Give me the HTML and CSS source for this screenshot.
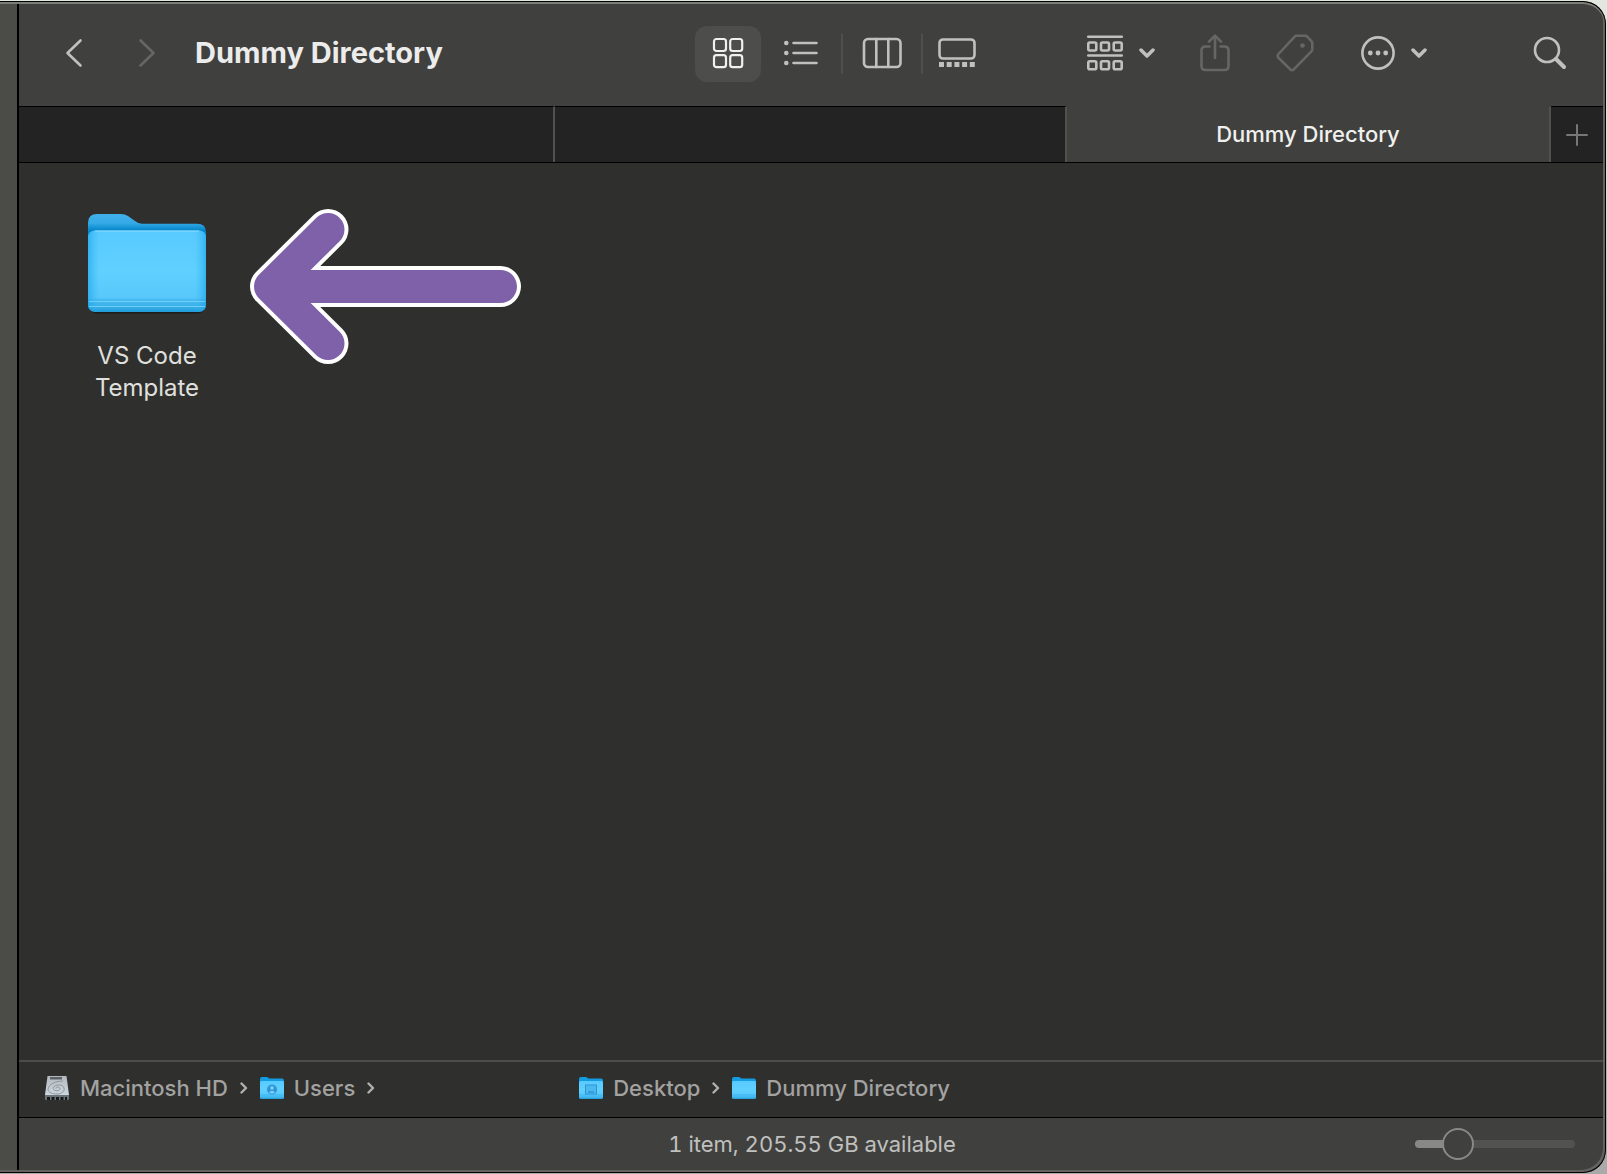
FILE: index.html
```html
<!DOCTYPE html>
<html lang="en">
<head>
<meta charset="utf-8">
<meta name="viewport" content="width=device-width, initial-scale=1">
<title>Dummy Directory</title>
<link rel="stylesheet" href="styles.css">
</head>
<body>
<svg class="defs" width="0" height="0" aria-hidden="true">
  <defs>
    <linearGradient id="back" x1="0" y1="0" x2="0" y2="1"><stop offset="0" stop-color="#41b0ea"/><stop offset=".15" stop-color="#35aae6"/><stop offset=".27" stop-color="#0687cb"/><stop offset="1" stop-color="#0687cb"/></linearGradient>
    <linearGradient id="front" x1="0" y1="0" x2="0" y2="1"><stop offset="0" stop-color="#59caff"/><stop offset=".5" stop-color="#60d0ff"/><stop offset=".83" stop-color="#58c8fb"/><stop offset=".84" stop-color="#49bdf3"/><stop offset=".93" stop-color="#3ab1ea"/><stop offset="1" stop-color="#1f9bd8"/></linearGradient>
    <linearGradient id="edge" x1="0" y1="0" x2="1" y2="0"><stop offset="0" stop-color="#16a0e6" stop-opacity=".6"/><stop offset=".1" stop-color="#3bb8f5" stop-opacity="0"/><stop offset=".9" stop-color="#3bb8f5" stop-opacity="0"/><stop offset="1" stop-color="#16a0e6" stop-opacity=".6"/></linearGradient>
    <linearGradient id="metal" x1="0" y1="0" x2="0" y2="1"><stop offset="0" stop-color="#b4b9be"/><stop offset="1" stop-color="#cfdde3"/></linearGradient>
    <symbol id="folder" viewBox="0 0 24 24">
      <path d="M0 3Q0 1 2 1H7L9.500 2.500H22Q24 2.500 24 4.500V12H0Z" fill="#149ce2"/>
      <rect y="5" width="24" height="18" rx="1.500" fill="url(#front)"/>
      <path d="M0 19H24" stroke="#2ca8e8" stroke-width=".7"/>
    </symbol>
  </defs>
</svg>
<div class="window">
  <aside class="sidebar" aria-label="Sidebar"></aside>
  <main class="main">
    <header class="toolbar">
      <nav class="history" aria-label="History">
        <button class="tool nav-button" aria-label="Back"><svg width="18" height="30" viewBox="0 0 18 30"><path d="M15.500 2.500 2.500 15l13 12.500"/></svg></button>
        <button class="tool nav-button dim" aria-label="Forward"><svg width="18" height="30" viewBox="0 0 18 30"><path d="M2.500 2.500 15.500 15l-13 12.500"/></svg></button>
      </nav>
      <h1 class="title">Dummy Directory</h1>
      <div class="views" role="group" aria-label="View">
        <button class="tool view selected" aria-label="Icons"><svg width="32" height="32" viewBox="0 0 32 32"><g stroke-width="2.200"><rect x="2" y="2" width="12" height="12" rx="2.500"/><rect x="18.200" y="2" width="12" height="12" rx="2.500"/><rect x="2" y="18.200" width="12" height="12" rx="2.500"/><rect x="18.200" y="18.200" width="12" height="12" rx="2.500"/></g></svg></button>
        <button class="tool view" aria-label="List"><svg width="34" height="26" viewBox="0 0 34 26"><path d="M9.500 3H32.500M9.500 13H32.500M9.500 23H32.500"/><g class="solid"><circle cx="2.300" cy="3" r="2.300"/><circle cx="2.300" cy="13" r="2.300"/><circle cx="2.300" cy="23" r="2.300"/></g></svg></button>
        <span class="separator"></span>
        <button class="tool view columns" aria-label="Columns"><svg width="40" height="32" viewBox="0 0 40 32"><rect x="2" y="2" width="36.500" height="28" rx="4"/><path d="M14.300 2V30M26.300 2V30"/></svg></button>
        <span class="separator"></span>
        <button class="tool view gallery" aria-label="Gallery"><svg width="38" height="30" viewBox="0 0 38 30"><rect x="1.500" y="1.500" width="35" height="19" rx="3.500"/><g class="solid"><rect x="1" y="24" width="5" height="5"/><rect x="8.700" y="24" width="5" height="5"/><rect x="16.400" y="24" width="5" height="5"/><rect x="24.100" y="24" width="5" height="5"/><rect x="31.800" y="24" width="5" height="5"/></g></svg></button>
      </div>
      <div class="actions">
        <button class="tool menu" aria-label="Group">
          <svg width="36" height="36" viewBox="0 0 36 36"><path d="M1.200 1.700H34.800M1.200 20.500H34.800"/><rect x="1.300" y="7.500" width="8" height="8" rx="1.500"/><rect x="14" y="7.500" width="8" height="8" rx="1.500"/><rect x="26.700" y="7.500" width="8" height="8" rx="1.500"/><rect x="1.300" y="26.300" width="8" height="8" rx="1.500"/><rect x="14" y="26.300" width="8" height="8" rx="1.500"/><rect x="26.700" y="26.300" width="8" height="8" rx="1.500"/></svg>
          <svg class="heavy" width="16" height="10" viewBox="0 0 16 10"><path d="M2 2 8 8 14 2"/></svg>
        </button>
        <button class="tool action dim" aria-label="Share"><svg width="30" height="38" viewBox="0 0 30 38"><path d="M9.500 12.500H5.500Q1.500 12.500 1.500 16.500V32Q1.500 36 5.500 36H24.500Q28.500 36 28.500 32V16.500Q28.500 12.500 24.500 12.500H20.500M15 24V2M9 7.700 15 1.700 21 7.700"/></svg></button>
        <button class="tool action dim" aria-label="Tags"><svg width="38" height="38" viewBox="0 0 38 38"><path d="M20.500 1.800H29Q30.500 1.800 31.500 2.800L35.300 7Q36.300 8 36.300 9.500V15Q36.300 16.500 35.200 17.600L18 35.200Q16 37 14 35.200L2.700 24Q.700 22 2.500 20L18.500 2.800Q19.300 1.800 20.500 1.800Z"/><circle class="solid" cx="26.500" cy="11.500" r="2.300"/></svg></button>
        <button class="tool menu more" aria-label="More">
          <svg width="34" height="34" viewBox="0 0 34 34"><circle cx="17" cy="17" r="15.600"/><g class="solid"><circle cx="9.300" cy="17" r="2.400"/><circle cx="17" cy="17" r="2.400"/><circle cx="24.700" cy="17" r="2.400"/></g></svg>
          <svg class="heavy" width="16" height="10" viewBox="0 0 16 10"><path d="M2 2 8 8 14 2"/></svg>
        </button>
        <button class="tool action search" aria-label="Search"><svg width="34" height="34" viewBox="0 0 34 34"><circle cx="14" cy="14" r="12"/><path d="M23 23 31 31" stroke-width="4"/></svg></button>
      </div>
    </header>
    <div class="tabs">
      <button class="tab first" aria-label="Tab 1"></button>
      <button class="tab second" aria-label="Tab 2"></button>
      <button class="tab active">Dummy Directory</button>
      <button class="new-tab" aria-label="New tab"><svg width="22" height="22" viewBox="0 0 22 22"><path d="M11 1V21M1 11H21"/></svg></button>
    </div>
    <section class="files">
      <a class="file" href="#">
        <svg width="118" height="100" viewBox="0 0 118 100">
          <path d="M1 90Q1 99.500 9 99.500H109Q117 99.500 117 90Z" fill="#1d1d1c"/>
          <path d="M0 9Q0 0 9 0H33Q37 0 40 2L47 7Q50 9.700 54 9.700H109Q118 9.700 118 18V60H0Z" fill="url(#back)"/>
          <rect y="16.500" width="118" height="81.500" rx="7" fill="url(#front)"/>
          <rect y="16.500" width="118" height="81.500" rx="7" fill="url(#edge)"/>
          <path d="M7 17H111" stroke="#8bdcff" stroke-width="1"/>
          <path d="M1 87.500H117M1 92.500H117" stroke="#70cdf8" stroke-width="1"/>
        </svg>
        <span class="file-name">VS Code Template</span>
      </a>
      <svg class="arrow" width="272" height="156" viewBox="250 209 272 156" aria-hidden="true"><path class="arrow-rim" d="M500.500 286.500H270.500M328 229.500 270.500 286.500 328 343.500"/><path class="arrow-body" d="M500.500 286.500H270.500M328 229.500 270.500 286.500 328 343.500"/></svg>
    </section>
    <nav class="path" aria-label="Path">
      <a class="crumb" href="#"><svg width="26" height="26" viewBox="0 0 26 26"><path d="M3.500 1H22.500L25 20V23H1V20Z" fill="url(#metal)"/><path d="M1 20H25V24Q25 25 24 25H2Q1 25 1 24Z" fill="#6b7377"/><path d="M3 23.500H23" stroke="#17191a" stroke-width="3" stroke-dasharray="3 1.500"/><rect x="6" y="2" width="12" height="2.500" fill="#5c6165"/><path d="M19 6C12 6 5 9 4 14C4 18 9 19 13 19C18 19 21 16 20 13C19 9 11 9 9 13C9 16 16 17 16 13.500C15 11.500 12 12 12 13.500" fill="none" stroke="#8d979b" stroke-width="1"/></svg>Macintosh HD</a>
      <svg class="chevron" width="8" height="14" viewBox="0 0 8 14"><path d="M1.500 2.500 6 7 1.500 11.500"/></svg>
      <a class="crumb" href="#"><svg width="24" height="24"><use href="#folder"/><circle cx="12" cy="13.500" r="5" fill="#2f95d6"/><circle cx="12" cy="12" r="1.800" fill="#7cd2fa"/><path d="M9 16.500Q12 13 15 16.500Q12 18.500 9 16.500" fill="#7cd2fa"/></svg>Users</a>
      <svg class="chevron" width="8" height="14" viewBox="0 0 8 14"><path d="M1.500 2.500 6 7 1.500 11.500"/></svg>
      <span class="hidden-crumb"></span>
      <a class="crumb" href="#"><svg width="24" height="24"><use href="#folder"/><rect x="6.500" y="9" width="11" height="9" fill="#4ab9ee" stroke="#2f95d6"/><path d="M9 16H15" stroke="#2f95d6" stroke-width="1.500"/></svg>Desktop</a>
      <svg class="chevron" width="8" height="14" viewBox="0 0 8 14"><path d="M1.500 2.500 6 7 1.500 11.500"/></svg>
      <a class="crumb" href="#"><svg width="24" height="24"><use href="#folder"/></svg>Dummy Directory</a>
    </nav>
    <footer class="status">
      <span class="summary">1 item, 205.55 GB available</span>
      <input class="zoom" type="range" min="0" max="100" value="21" aria-label="Icon size">
    </footer>
  </main>
</div>
</body>
</html>
```
FILE: styles.css
```css
* {
  box-sizing: border-box;
}

body {
  margin: 0;
  background: linear-gradient(#e2e8e0, #a9a9a9);
  color: #e0e0df;
  font-family: Inter, "Liberation Sans", sans-serif;
  font-size: 22px;
}

button {
  margin: 0;
  padding: 0;
  border: 0;
  background: none;
  color: inherit;
  font: inherit;
}

a {
  color: inherit;
  text-decoration: none;
}

svg {
  display: block;
  flex: none;
}

.defs {
  position: absolute;
}

.window {
  position: relative;
  display: flex;
  min-height: 100vh;
  border: 1px solid transparent;
  border-left: 0;
  border-radius: 0 24px 24px 0;
  background: #2f2f2d padding-box;
  overflow: hidden;
}

/* dark outline with the light inner rim that runs over the whole window */
.window::after {
  content: "";
  position: absolute;
  inset: 0;
  border: 1px solid #000;
  border-left: 0;
  border-radius: 0 23px 23px 0;
  box-shadow: inset 0 2px #7b7f78, inset -2px -2px #62625f;
  pointer-events: none;
}

.sidebar {
  width: 19px;
  flex: none;
  border-right: 2px solid #000;
  background: #4b4b48;
}

.main {
  flex: 1;
  min-width: 0;
  display: flex;
  flex-direction: column;
  padding: 1px 1px 1px 0;
}

.toolbar {
  display: flex;
  align-items: center;
  height: 104px;
  padding: 0 25px 0 31px;
  background: #40403e;
}

.history {
  display: flex;
  gap: 25px;
}

.tool {
  display: flex;
  align-items: center;
  justify-content: center;
  height: 56px;
  padding-bottom: 2px;
  border-radius: 12px;
  color: #c0c0bf;
}

.tool svg {
  fill: none;
  stroke: currentColor;
  stroke-width: 2.6;
  stroke-linecap: round;
  stroke-linejoin: round;
}

.tool .heavy {
  stroke-width: 3.5;
}

.tool .solid {
  fill: currentColor;
  stroke: none;
}

.tool.dim {
  color: #666664;
}

.nav-button {
  width: 48px;
}

.title {
  flex: 1;
  margin: 0 0 0 24px;
  padding-bottom: 2px;
  color: #ececec;
  font-size: 29px;
  font-weight: 700;
  line-height: 36px;
  white-space: nowrap;
}

.views {
  display: flex;
  align-items: center;
  gap: 7px;
}

.view {
  width: 66px;
}

.view.selected {
  background: #4d4d4b;
  color: #f0f0ef;
}

.view.columns {
  width: 64px;
}

.view.gallery {
  width: 54px;
}

.separator {
  width: 2px;
  height: 40px;
  background: #4f4f4d;
}

.actions {
  display: flex;
  gap: 20px;
  margin-left: 93px;
}

.menu {
  gap: 16px;
  padding: 0 10px 2px;
}

.action {
  width: 60px;
}

.more {
  padding-left: 16px;
}

.search {
  margin-left: 63px;
}

.tabs {
  display: flex;
  height: 57px;
  border-bottom: 1px solid #000;
  background: #40403e;
}

.tab {
  min-width: 0;
  border-top: 1px solid #000;
  border-right: 2px solid #515150;
  background: #232323;
  text-align: center;
}

.first {
  flex: 536 1 0;
}

.second {
  flex: 512 1 0;
}

.active {
  flex: 484 1 0;
  padding-bottom: 2px;
  border-top-color: transparent;
  background: #40403e;
  color: #f0f0ef;
  font-weight: 500;
}

.new-tab {
  display: flex;
  align-items: center;
  justify-content: center;
  width: 54px;
  padding-right: 2px;
  border-top: 1px solid #000;
  background: #232323;
}

.new-tab svg {
  stroke: #777775;
  stroke-width: 2;
  stroke-linecap: round;
}

.files {
  position: relative;
  flex: 1;
  padding: 51px 64px;
}

.file {
  display: flex;
  flex-direction: column;
  align-items: center;
  gap: 26px;
  width: 128px;
}

.file-name {
  width: 112px;
  font-size: 24px;
  line-height: 32px;
  text-align: center;
}

.arrow {
  position: absolute;
  left: 231px;
  top: 46px;
  fill: none;
  stroke-linecap: round;
  stroke-linejoin: round;
}

.arrow-rim {
  stroke: #fff;
  stroke-width: 41;
}

.arrow-body {
  stroke: #7e61a9;
  stroke-width: 33;
}

.path {
  display: flex;
  align-items: center;
  gap: 12px;
  height: 57px;
  padding: 0 0 4px 25px;
  border-top: 2px solid #4c4c4a;
  color: #a2a2a1;
  font-weight: 500;
}

.crumb {
  display: flex;
  align-items: center;
  gap: 10px;
  white-space: nowrap;
}

.chevron {
  fill: none;
  stroke: #b0b0af;
  stroke-width: 2.4;
  stroke-linecap: round;
  stroke-linejoin: round;
}

.hidden-crumb {
  width: 180px;
}

.status {
  display: grid;
  grid-template-columns: 1fr auto 1fr;
  align-items: center;
  height: 55px;
  padding: 0 30px 2px;
  border-top: 1px solid #000;
  background: #40403e;
  color: #c0c0bf;
}

.summary {
  grid-column: 2;
  font-variant-numeric: tabular-nums;
}

.zoom {
  appearance: none;
  justify-self: end;
  width: 160px;
  height: 32px;
  margin: 0;
  background: none;
}

.zoom::-webkit-slider-runnable-track {
  height: 8px;
  border-radius: 4px;
  background: linear-gradient(90deg, #888886 22%, #525250 22%);
}

.zoom::-webkit-slider-thumb {
  appearance: none;
  width: 32px;
  height: 32px;
  margin-top: -12px;
  border: 2px solid #888886;
  border-radius: 50%;
  background: #40403e;
}
```
